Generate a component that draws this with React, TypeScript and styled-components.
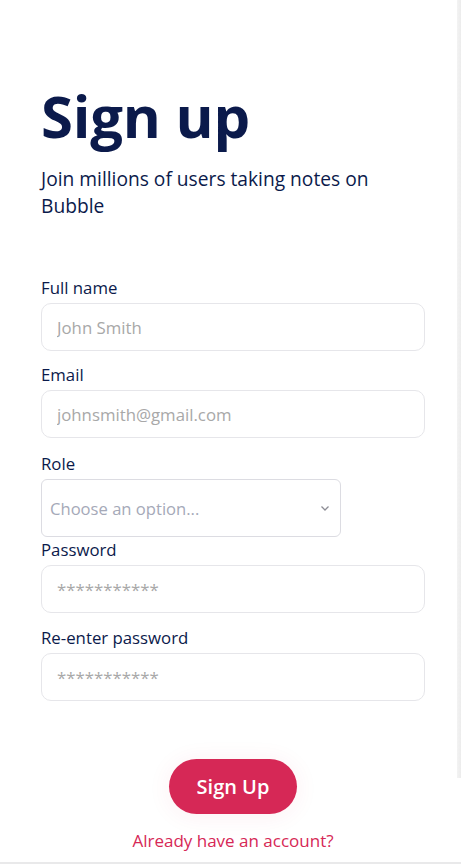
import React from "react";
import styled, { createGlobalStyle } from "styled-components";

const Global = createGlobalStyle`
  html, body { margin: 0; padding: 0; background: #ffffff; }
  body { font-family: "Open Sans", "Noto Sans", Arial, sans-serif; }
  * { box-sizing: border-box; }
`;

const Screen = styled.div`
  width: 461px;
  height: 864px;
  border-bottom: 2px solid #e9e9ea;
  overflow: hidden;
  background: #ffffff;
`;

const Sheet = styled.main`
  position: relative;
  width: 457px;
  padding: 76px 0 0 41px;
  display: flex;
  flex-direction: column;
  &::after {
    content: "";
    position: absolute;
    top: 0;
    right: -4px;
    width: 4px;
    height: 778px;
    background: linear-gradient(to right, #f3f3f3, #ececec);
  }
`;

const Title = styled.h1`
  margin: 0;
  font-size: 58px;
  line-height: 80px;
  font-weight: 700;
  color: #0b1a4b;
  letter-spacing: -0.2px;
`;

const Subtitle = styled.p`
  margin: 9px 0 0;
  width: 384px;
  font-size: 19.2px;
  line-height: 27px;
  color: #0b1a4b;
`;

const Form = styled.form`
  margin-top: 57px;
  width: 384px;
  display: flex;
  flex-direction: column;
`;

const Field = styled.div<{ $after: number }>`
  display: flex;
  flex-direction: column;
  gap: 3px;
  margin-bottom: ${(p) => p.$after}px;
`;

const Label = styled.label`
  font-size: 16.8px;
  line-height: 24px;
  color: #0b1a4b;
`;

const Input = styled.input`
  width: 384px;
  height: 48px;
  padding: 0 15px;
  border: 1px solid #e6e6ea;
  border-radius: 10px;
  background: #ffffff;
  font-family: "Open Sans", Arial, sans-serif;
  font-size: 16.8px;
  color: #0b1a4b;
  outline: none;
  &::placeholder { color: #a8a8a8; }
`;

const SelectBox = styled.div`
  width: 300px;
  height: 58px;
  padding: 0 10px 0 8px;
  border: 1px solid #dcdce2;
  border-radius: 6px;
  background: #ffffff;
  display: flex;
  align-items: center;
  justify-content: space-between;
  font-size: 16.6px;
  color: #a5a9b8;
`;

const Actions = styled.div`
  margin-top: 58px;
  width: 384px;
  display: flex;
  flex-direction: column;
  align-items: center;
`;

const Button = styled.button`
  width: 128px;
  height: 55px;
  border: none;
  border-radius: 28px;
  background: #d62856;
  color: #ffffff;
  font-family: "Open Sans", Arial, sans-serif;
  font-size: 20px;
  font-weight: 600;
  box-shadow: 0 2px 24px rgba(214, 40, 86, 0.07);
  cursor: pointer;
`;

const Link = styled.a`
  margin-top: 15px;
  font-size: 17px;
  line-height: 24px;
  color: #d62856;
  text-decoration: none;
`;

const Chevron = () => (
  <svg width="10" height="7" viewBox="0 0 10 7" fill="none">
    <path d="M1.5 1.5 L5 5 L8.5 1.5" stroke="#8c8c94" strokeWidth="1.3" />
  </svg>
);

export default function App() {
  return (
    <>
      <Global />
      <Screen>
        <Sheet>
          <Title>Sign up</Title>
          <Subtitle>Join millions of users taking notes on Bubble</Subtitle>
          <Form onSubmit={(e) => e.preventDefault()}>
            <Field $after={12}>
              <Label>Full name</Label>
              <Input placeholder="John Smith" />
            </Field>
            <Field $after={14}>
              <Label>Email</Label>
              <Input placeholder="johnsmith@gmail.com" />
            </Field>
            <Field $after={1}>
              <Label>Role</Label>
              <SelectBox>
                <span>Choose an option...</span>
                <Chevron />
              </SelectBox>
            </Field>
            <Field $after={13}>
              <Label>Password</Label>
              <Input placeholder="***********" />
            </Field>
            <Field $after={0}>
              <Label>Re-enter password</Label>
              <Input placeholder="***********" />
            </Field>
          </Form>
          <Actions>
            <Button type="button">Sign Up</Button>
            <Link href="#">Already have an account?</Link>
          </Actions>
        </Sheet>
      </Screen>
    </>
  );
}
